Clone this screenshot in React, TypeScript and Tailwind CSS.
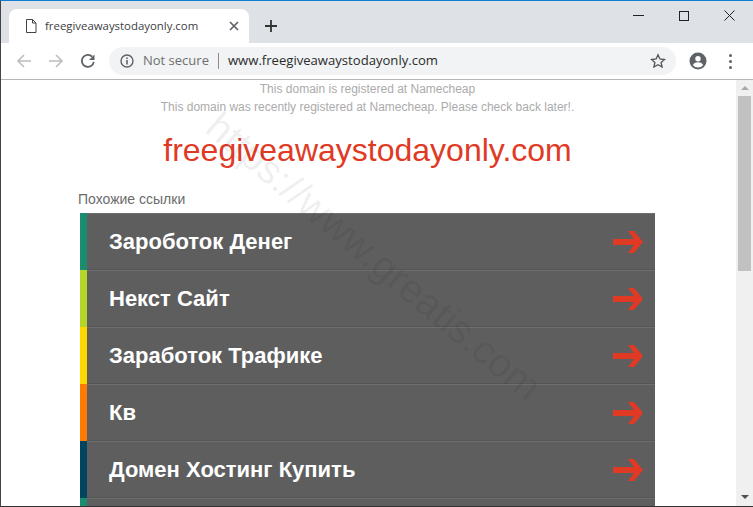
const rows = [
  { label: 'Зароботок Денег', color: 'bg-[#1c8c6e]' },
  { label: 'Некст Сайт', color: 'bg-[#b5d52a]' },
  { label: 'Заработок Трафике', color: 'bg-[#ffd800]' },
  { label: 'Кв', color: 'bg-[#ff7a00]' },
  { label: 'Домен Хостинг Купить', color: 'bg-[#03455f]' },
  { label: '', color: 'bg-[#1c8c6e]' },
];

const Arrow = () => (
  <svg width="30" height="22" viewBox="0 0 30 22" className="shrink-0">
    <path d="M0 8H21L15 0H21L30 11L21 22H15L21 14H0z" fill="#e03a25" />
  </svg>
);

const Nav = ({ flip, color }: { flip?: boolean; color: string }) => (
  <svg width="16" height="16" viewBox="0 0 16 16" fill="none" stroke={color} strokeWidth="1.6" className={flip ? 'rotate-180' : ''}>
    <path d="M15 8H2M8 2 2 8l6 6" />
  </svg>
);

export default function App() {
  return (
    <div className="relative flex h-[507px] w-[753px] flex-col overflow-hidden border-l border-l-[#444] border-t border-t-[#0f7fd6] border-b border-b-[#333] bg-white font-['Liberation_Sans',sans-serif]">
      {/* tab strip */}
      <div className="flex h-[42px] shrink-0 items-end bg-[#dee1e6] pl-[8px]">
        <div className="flex h-[34px] w-[240px] items-center rounded-t-[8px] bg-white pl-[16px] pr-[10px]">
          <svg width="12" height="14" viewBox="0 0 12 14" fill="none" stroke="#444" strokeWidth="1" className="shrink-0">
            <path d="M1.500.5h6l3.500 3.500v9.500h-9.500zM7.500.5V4H11" />
          </svg>
          <span className="ml-[8px] flex-1 font-['Open_Sans',sans-serif] text-[11.4px] text-[#3c4043]">freegiveawaystodayonly.com</span>
          <svg width="10" height="10" viewBox="0 0 10 10" stroke="#5f6368" strokeWidth="1.700">
            <path d="M1 1l8 8M9 1 1 9" />
          </svg>
        </div>
        <svg width="14" height="14" viewBox="0 0 14 14" stroke="#333" strokeWidth="1.800" className="mb-[10px] ml-[15px]">
          <path d="M7 1v12M1 7h12" />
        </svg>
        <div className="mb-[22px] ml-auto flex items-center gap-[35px] pr-[18px]">
          <div className="h-px w-[11px] bg-[#222]" />
          <div className="h-[10px] w-[10px] border border-[#222]" />
          <svg width="11" height="11" viewBox="0 0 11 11" stroke="#222" strokeWidth="1">
            <path d="M.5.5l10 10M10.500.5l-10 10" />
          </svg>
        </div>
      </div>
      {/* toolbar */}
      <div className="flex h-[37px] shrink-0 items-center border-b border-b-[#b5b5b5] bg-white pl-[15px]">
        <Nav color="#bdbdbd" />
        <div className="ml-[16px]">
          <Nav flip color="#bdbdbd" />
        </div>
        <svg width="16" height="16" viewBox="0 0 16 16" fill="none" className="ml-[16px]">
          <path d="M13.800 8.800A6 6 0 1 1 12.200 3.700" stroke="#5f6368" strokeWidth="1.800" />
          <path d="M14.500 1.500v5.500H9z" fill="#5f6368" />
        </svg>
        <div className="ml-[13px] flex h-[28px] w-[567px] items-center rounded-full bg-[#f1f3f4] pl-[11px] pr-[10px] font-['Open_Sans',sans-serif]">
          <svg width="14" height="14" viewBox="0 0 14 14" fill="none" stroke="#5f6368" className="shrink-0">
            <circle cx="7" cy="7" r="6" strokeWidth="1.400" />
            <path d="M7 6v4.500M7 3.500v1.500" strokeWidth="1.600" />
          </svg>
          <span className="ml-[9px] text-[13px] text-[#6f6f6f]">Not secure</span>
          <div className="ml-[9px] mr-[9px] h-[16px] w-px bg-[#8d8d8d]" />
          <span className="text-[13.1px] text-[#2c2c2c]">www.freegiveawaystodayonly.com</span>
          <svg width="16" height="16" viewBox="0 0 16 16" fill="none" stroke="#555" strokeWidth="1.300" className="ml-auto">
            <path d="M8 1.800l1.900 4.200 4.600.5-3.400 3 1 4.500L8 11.700 3.900 14l1-4.500-3.400-3 4.600-.5z" />
          </svg>
        </div>
        <svg width="18" height="18" viewBox="0 0 18 18" className="ml-[13px]">
          <circle cx="9" cy="9" r="8.500" fill="#5f6368" />
          <circle cx="9" cy="6.700" r="2.700" fill="#fff" />
          <path d="M3.800 13c1-2 3.300-2.700 5.200-2.700s4.200.7 5.200 2.700a6.600 6.600 0 0 1-10.400 0z" fill="#fff" />
        </svg>
        <div className="ml-[22px] flex flex-col gap-[3px]">
          <div className="h-[3px] w-[3px] rounded-full bg-[#5f6368]" />
          <div className="h-[3px] w-[3px] rounded-full bg-[#5f6368]" />
          <div className="h-[3px] w-[3px] rounded-full bg-[#5f6368]" />
        </div>
      </div>
      {/* page */}
      <div className="flex min-h-0 flex-1">
        <div className="relative min-w-0 flex-1 overflow-hidden">
          <div className="flex flex-col items-center pr-[2px] text-[12px] leading-[18px] text-[#ababab]">
            <div>This domain is registered at Namecheap</div>
            <div>This domain was recently registered at Namecheap. Please check back later!.</div>
          </div>
          <div className="mt-[14px] pr-[2px] text-center text-[32px] leading-[40px] text-[#e03a25]">freegiveawaystodayonly.com</div>
          <div className="ml-[77px] mt-[19px] text-[14px] leading-[20px] text-[#6b6b6b]">Похожие ссылки</div>
          <div className="ml-[79px] mt-[4px] w-[575px]">
            {rows.map((row, i) => (
              <div key={i} className={`flex h-[57px] ${row.color}`}>
                <div className="ml-[7px] flex flex-1 items-center border-t border-t-[#6e6e6e] border-b border-b-[#555] bg-[#5e5e5e] pl-[22px] pr-[12px]">
                  <span className="flex-1 text-[22px] font-bold text-white">{row.label}</span>
                  {row.label && <Arrow />}
                </div>
              </div>
            ))}
          </div>
          {/* watermark */}
          <div className="pointer-events-none absolute left-[224px] top-[25px] origin-top-left rotate-[40deg] whitespace-nowrap text-[40px] leading-none text-black/[0.07]">
            https://www.greatis.com
          </div>
        </div>
        {/* scrollbar */}
        <div className="flex w-[17px] shrink-0 flex-col items-center bg-[#f0f0f0]">
          <div className="mt-[6px] h-0 w-0 border-x-[4px] border-b-[4px] border-x-transparent border-b-[#a8a8a8]" />
          <div className="mt-[6px] h-[175px] w-[13px] bg-[#c1c1c1]" />
          <div className="mb-[7px] mt-auto h-0 w-0 border-x-[4px] border-t-[4px] border-x-transparent border-t-[#505050]" />
        </div>
      </div>
    </div>
  );
}
